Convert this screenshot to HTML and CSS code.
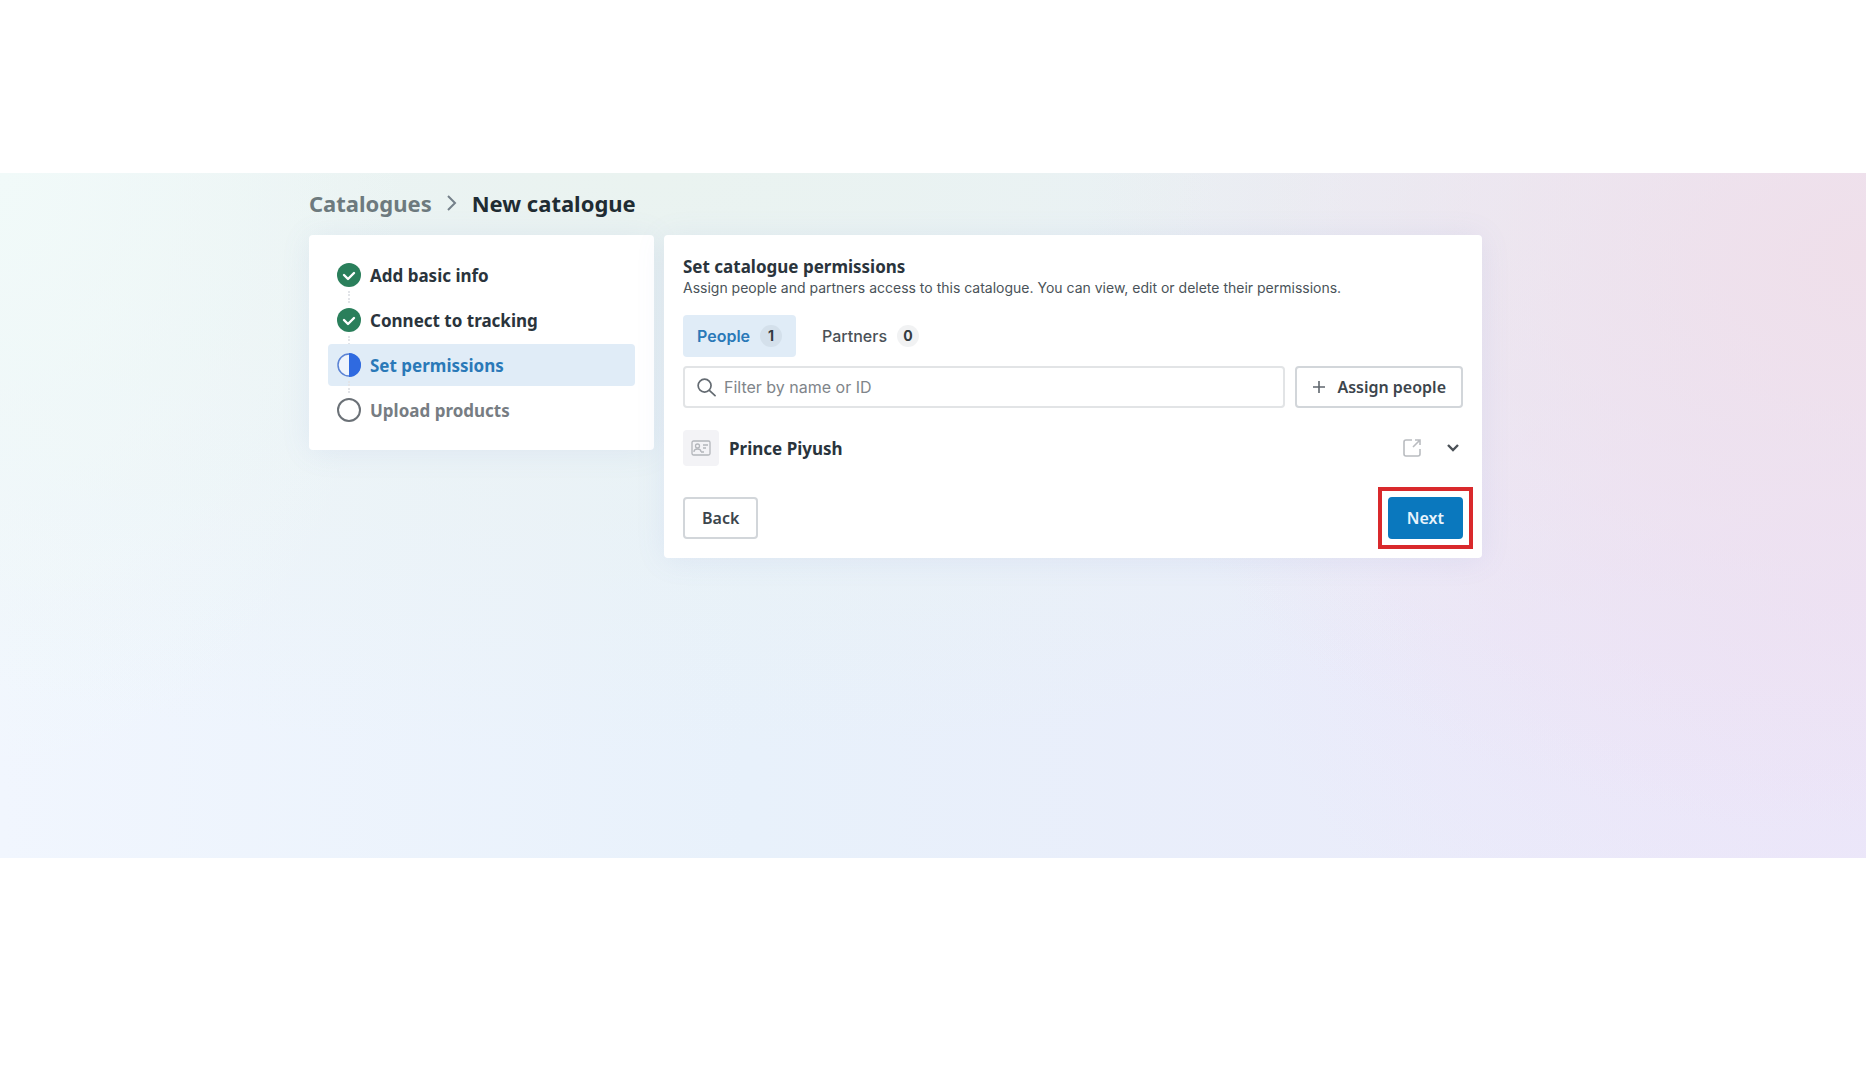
FILE: index.html
```html
<!DOCTYPE html>
<html lang="en">
<head>
    <meta charset="UTF-8">
    <meta name="viewport" content="width=device-width, initial-scale=1.0">
    <title>New catalogue</title>
    <link rel="stylesheet" href="styles.css">
</head>
<body>
    <div class="page">
        <div class="content">
            <nav class="breadcrumb" aria-label="Breadcrumb">
                <a href="#">Catalogues</a>
                <svg width="10" height="18" viewBox="0 0 10 18" fill="none" stroke="#75808a" stroke-width="2"><path d="M1 2l7 7-7 7"/></svg>
                <h1>New catalogue</h1>
            </nav>

            <div class="columns">
                <!-- Steps -->
                <aside class="card">
                    <ol class="steps">
                        <li class="step">
                            <svg width="24" height="24" viewBox="0 0 24 24"><circle cx="12" cy="12" r="12" fill="#2a7f5b"/><path d="M7 12l4 4 6-6" fill="none" stroke="#fff" stroke-width="2.4" stroke-linecap="round" stroke-linejoin="round"/></svg>
                            Add basic info
                        </li>
                        <li class="step">
                            <svg width="24" height="24" viewBox="0 0 24 24"><circle cx="12" cy="12" r="12" fill="#2a7f5b"/><path d="M7 12l4 4 6-6" fill="none" stroke="#fff" stroke-width="2.4" stroke-linecap="round" stroke-linejoin="round"/></svg>
                            Connect to tracking
                        </li>
                        <li class="step active" aria-current="step">
                            <svg width="24" height="24" viewBox="0 0 24 24"><circle cx="12" cy="12" r="11" fill="#eef4fc" stroke="#5b83d4" stroke-width="1.5"/><path d="M12 0a12 12 0 0 1 0 24z" fill="#2f6ae0"/></svg>
                            Set permissions
                        </li>
                        <li class="step upcoming">
                            <svg width="24" height="24" viewBox="0 0 24 24"><circle cx="12" cy="12" r="11" fill="#fff" stroke="#6b7177" stroke-width="2"/></svg>
                            Upload products
                        </li>
                    </ol>
                </aside>

                <!-- Permissions -->
                <main class="card">
                    <h2>Set catalogue permissions</h2>
                    <p class="intro">Assign people and partners access to this catalogue. You can view, edit or delete their permissions.</p>

                    <div class="tabs" role="tablist">
                        <button class="tab selected" role="tab" aria-selected="true">People <span class="count">1</span></button>
                        <button class="tab" role="tab" aria-selected="false">Partners <span class="count">0</span></button>
                    </div>

                    <div class="toolbar">
                        <label class="search">
                            <svg width="19" height="19" viewBox="0 0 20 20" fill="none" stroke="#646b72" stroke-width="1.8" stroke-linecap="round"><circle cx="8" cy="8" r="6.8"/><path d="M13 13l6 5.5"/></svg>
                            <input type="text" placeholder="Filter by name or ID" aria-label="Filter by name or ID">
                        </label>
                        <button class="btn assign">
                            <svg width="14" height="14" viewBox="0 0 14 14" stroke="#5f666d" stroke-width="1.6"><path d="M7 1v12M1 7h12"/></svg>
                            Assign people
                        </button>
                    </div>

                    <div class="person">
                        <span class="avatar">
                            <svg width="20" height="16" viewBox="0 0 20 16" fill="none" stroke="#b3b6bb" stroke-width="1.3"><rect x="1" y="1" width="18" height="14" rx="1.5"/><circle cx="6.5" cy="6" r="2"/><path d="M3 12c0-4 7-4 7 0M12 5h5M12 8h3M10 12h3"/></svg>
                        </span>
                        <span class="name">Prince Piyush</span>
                        <button class="icon-btn" aria-label="Open">
                            <svg width="20" height="20" viewBox="0 0 20 20" fill="none" stroke="#b9bcc0" stroke-width="1.6"><path d="M10 2H4a2 2 0 0 0-2 2v12a2 2 0 0 0 2 2h12a2 2 0 0 0 2-2v-5M13 2h5v5M18 2l-7 7"/></svg>
                        </button>
                        <button class="icon-btn" aria-label="Expand">
                            <svg width="14" height="10" viewBox="0 0 14 10" fill="none" stroke="#4b5157" stroke-width="2.4"><path d="M2 2l5 5 5-5"/></svg>
                        </button>
                    </div>

                    <div class="actions">
                        <button class="btn">Back</button>
                        <div class="highlight">
                            <button class="btn next">Next</button>
                        </div>
                    </div>
                </main>
            </div>
        </div>
    </div>
</body>
</html>
```

FILE: styles.css
```css
body {
    font-family: 'Noto Sans', sans-serif;
    margin: 0;
    padding: 173px 0 0;
    background-color: #fff;
    color: #2a343c;
}

h1, h2, p, ol {
    margin: 0;
    padding: 0;
}

.page {
    min-height: 685px;
    background:
        radial-gradient(ellipse 42% 85% at 100% 12%, rgba(239, 223, 234, 1), rgba(239, 223, 234, 0)),
        radial-gradient(ellipse 34% 65% at 100% 62%, rgba(236, 227, 248, 1), rgba(236, 227, 248, 0)),
        radial-gradient(ellipse 22% 90% at 0% 0%, rgba(241, 250, 249, 1), rgba(241, 250, 249, 0)),
        radial-gradient(ellipse 75% 85% at 35% 0%, rgba(234, 243, 240, 1), rgba(234, 243, 240, 0)),
        linear-gradient(90deg, #f1f6fe, #e8f1fb 40%, #ebe9fa);
}

.content {
    max-width: 1173px;
    padding: 15px 20px 0 309px;
}

.breadcrumb {
    display: flex;
    align-items: center;
    gap: 15px;
    height: 30px;
    margin-bottom: 17px;
    font-size: 22px;
    font-weight: 700;
}

.breadcrumb a {
    color: #6d7a7e;
    text-decoration: none;
}

h1 {
    font-size: 22px;
    font-weight: 700;
    color: #1f2c33;
}

.columns {
    display: grid;
    grid-template-columns: 345px 1fr;
    gap: 10px;
    align-items: start;
}

.card {
    padding: 19px;
    background: #fff;
    border-radius: 4px;
    box-shadow: 0 2px 30px rgba(110, 130, 210, 0.1);
}

/* Steps */
.steps {
    display: flex;
    flex-direction: column;
    gap: 3px;
    list-style: none;
}

.step {
    position: relative;
    display: flex;
    align-items: center;
    gap: 9px;
    height: 42px;
    padding: 0 9px;
    border-radius: 4px;
    font-size: 17px;
    font-weight: 700;
}

/* dotted connector down to the next step */
.step:not(:last-child)::after {
    content: "";
    position: absolute;
    left: 20px;
    top: 37px;
    height: 12px;
    border-left: 2px dotted #e2e4e8;
}

.step.active {
    background: #e0ecf7;
    color: #2a79b8;
}

.step.upcoming {
    color: #777d83;
}

/* Permissions */
h2 {
    margin-top: 2px;
    font-size: 17px;
    line-height: 22px;
    font-weight: 700;
}

.intro {
    font-family: Inter, sans-serif;
    font-size: 14px;
    line-height: 20px;
    color: #4a5359;
}

.tabs {
    display: flex;
    gap: 12px;
    margin: 17px 0 9px;
}

.tab {
    display: flex;
    align-items: center;
    gap: 10px;
    height: 42px;
    padding: 0 14px;
    border: none;
    border-radius: 4px;
    background: none;
    color: #4a5157;
    font-family: Inter, sans-serif;
    font-size: 16px;
    font-weight: 500;
}

.tab.selected {
    background: #e0ecf7;
    color: #2a79b8;
    font-weight: 600;
}

.count {
    width: 22px;
    line-height: 22px;
    border-radius: 11px;
    background: rgba(60, 70, 80, 0.07);
    color: #343b41;
    font-size: 14px;
    font-weight: 700;
}

.toolbar {
    display: flex;
    gap: 10px;
}

.search {
    flex: 1;
    display: flex;
    align-items: center;
    gap: 8px;
    padding: 0 12px;
    border: 2px solid #e2e4e6;
    border-radius: 4px;
}

.search input {
    flex: 1;
    border: none;
    outline: none;
    padding: 0;
    font-family: Inter, sans-serif;
    font-size: 16px;
}

.search input::placeholder {
    color: #80858a;
}

.btn {
    box-sizing: border-box;
    height: 42px;
    padding: 0 17px;
    border: 2px solid #d2d6da;
    border-radius: 4px;
    background: #fff;
    color: #3c454c;
    font-family: 'Noto Sans', sans-serif;
    font-size: 16px;
    font-weight: 600;
}

.assign {
    display: flex;
    align-items: center;
    gap: 11px;
    padding: 0 15px;
}

.person {
    display: flex;
    align-items: center;
    gap: 10px;
    margin: 22px 0 31px;
}

.avatar {
    display: flex;
    align-items: center;
    justify-content: center;
    width: 36px;
    height: 36px;
    border-radius: 4px;
    background: #f3f3f6;
}

.name {
    flex: 1;
    font-size: 17px;
    font-weight: 700;
}

.icon-btn {
    display: flex;
    padding: 3px;
    border: none;
    background: none;
}

.icon-btn:first-of-type {
    margin-right: 8px;
}

.actions {
    display: flex;
    justify-content: space-between;
}

.highlight {
    outline: 4px solid #d9292c;
    outline-offset: 6px;
}

.next {
    border-color: #0a78be;
    background: #0a78be;
    color: #e8f4fc;
}
```
